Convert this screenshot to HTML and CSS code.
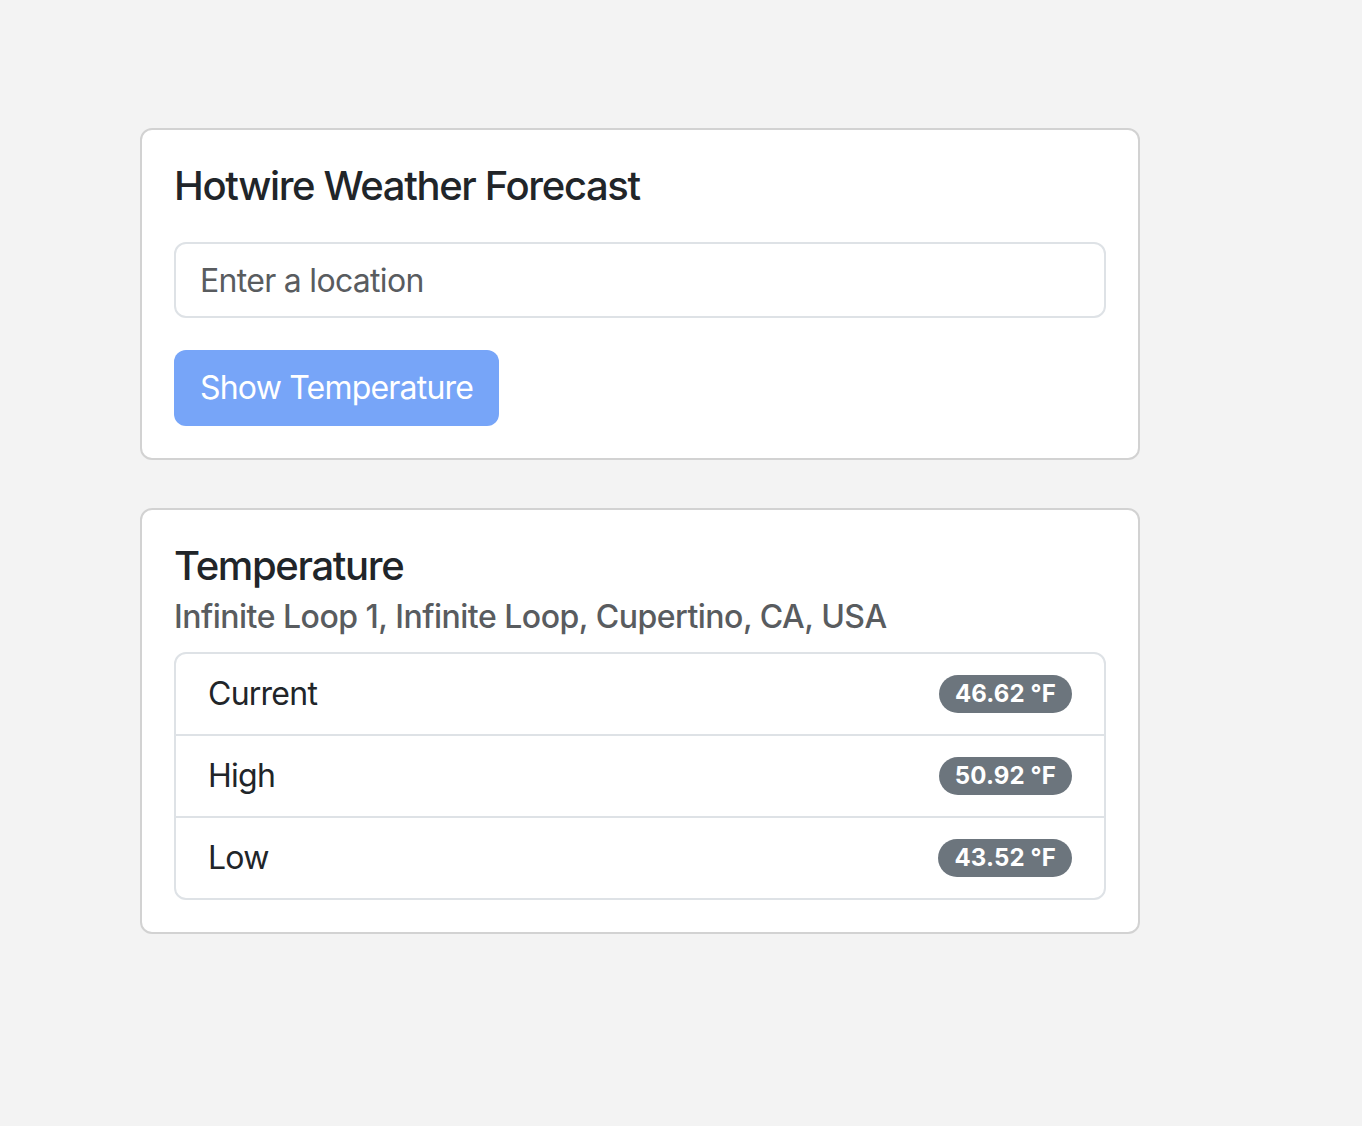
FILE: index.html
```html
<!DOCTYPE html>
<html lang="en">
<head>
<meta charset="utf-8">
<title>Hotwire Weather Forecast</title>
<link rel="stylesheet" href="styles.css">
</head>
<body>
<main class="page">
  <section class="card">
    <h5 class="card-title">Hotwire Weather Forecast</h5>
    <form class="form">
      <input class="form-control" type="text" placeholder="Enter a location">
      <button class="btn" type="button">Show Temperature</button>
    </form>
  </section>
  <section class="card">
    <h5 class="card-title">Temperature</h5>
    <h6 class="card-subtitle">Infinite Loop 1, Infinite Loop, Cupertino, CA, USA</h6>
    <ul class="list-group">
      <li class="list-item"><span>Current</span><span class="badge">46.62 °F</span></li>
      <li class="list-item"><span>High</span><span class="badge">50.92 °F</span></li>
      <li class="list-item"><span>Low</span><span class="badge">43.52 °F</span></li>
    </ul>
  </section>
</main>
</body>
</html>
```
FILE: styles.css
```css
* { box-sizing: border-box; }
html, body { margin: 0; padding: 0; }
body {
  background: #f3f3f3;
  font-family: Inter, "Noto Sans", "Liberation Sans", sans-serif;
  font-size: 32px;
  line-height: 1.5;
  color: #212529;
}
.page {
  padding: 128px 0 0 140px;
  width: 1140px;
  display: flex;
  flex-direction: column;
  gap: 48px;
}
.card {
  background: #fff;
  border: 2px solid #d2d2d2;
  border-radius: 12px;
  padding: 32px;
}
.card-title {
  margin: 0 0 32px;
  font-size: 40px;
  font-weight: 500;
  line-height: 1.2;
  letter-spacing: -1.35px;
}
.card:nth-child(2) .card-title { margin-bottom: 16px; }
.card-subtitle {
  margin: -8px 0 16px;
  font-size: 32px;
  font-weight: 500;
  line-height: 1.2;
  color: #595c5f;
  letter-spacing: -0.5px;
}
.form { display: flex; flex-direction: column; align-items: flex-start; gap: 32px; margin: 0; }
.form-control {
  width: 100%;
  height: 76px;
  padding: 12px 24px;
  border: 2px solid #dee2e6;
  border-radius: 12px;
  font: inherit;
  font-size: 32px;
  color: #212529;
  background: #fff;
  letter-spacing: -0.7px;
}
.form-control::placeholder { color: #595c5f; opacity: 1; }
.btn {
  height: 76px;
  padding: 0 26px;
  border: 0;
  border-radius: 12px;
  background: #77a5f8;
  color: #fff;
  font: inherit;
  font-size: 32px;
  letter-spacing: -0.8px;
}
.list-group {
  list-style: none;
  margin: 0;
  padding: 0;
  border: 2px solid #dee2e6;
  border-radius: 12px;
}
.list-item {
  display: flex;
  justify-content: space-between;
  align-items: center;
  padding: 16px 32px;
  line-height: 48px;
  letter-spacing: -0.75px;
}
.list-item + .list-item { border-top: 2px solid #dee2e6; }
.badge {
  background: #6c757d;
  color: #fff;
  font-size: 24px;
  font-weight: 700;
  line-height: 24px;
  padding: 7px 16px;
  border-radius: 999px;
  letter-spacing: 0.15px;
}
```
